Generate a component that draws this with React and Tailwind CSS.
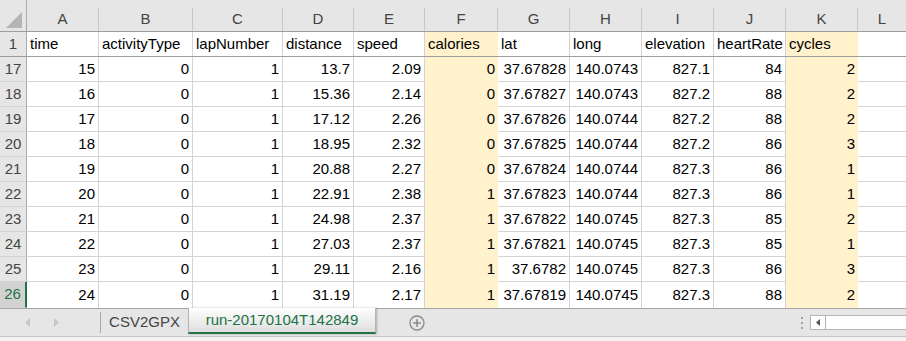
import React from 'react';

const cols = [
  { key: 'A', w: 72 },
  { key: 'B', w: 94 },
  { key: 'C', w: 90 },
  { key: 'D', w: 71 },
  { key: 'E', w: 71 },
  { key: 'F', w: 73, fill: true },
  { key: 'G', w: 72 },
  { key: 'H', w: 72 },
  { key: 'I', w: 72 },
  { key: 'J', w: 72 },
  { key: 'K', w: 72, fill: true },
];

const titles = ['time', 'activityType', 'lapNumber', 'distance', 'speed', 'calories', 'lat', 'long', 'elevation', 'heartRate', 'cycles'];

const rows = [
  [17, '15', '0', '1', '13.7', '2.09', '0', '37.67828', '140.0743', '827.1', '84', '2'],
  [18, '16', '0', '1', '15.36', '2.14', '0', '37.67827', '140.0743', '827.2', '88', '2'],
  [19, '17', '0', '1', '17.12', '2.26', '0', '37.67826', '140.0744', '827.2', '88', '2'],
  [20, '18', '0', '1', '18.95', '2.32', '0', '37.67825', '140.0744', '827.2', '86', '3'],
  [21, '19', '0', '1', '20.88', '2.27', '0', '37.67824', '140.0744', '827.3', '86', '1'],
  [22, '20', '0', '1', '22.91', '2.38', '1', '37.67823', '140.0744', '827.3', '86', '1'],
  [23, '21', '0', '1', '24.98', '2.37', '1', '37.67822', '140.0745', '827.3', '85', '2'],
  [24, '22', '0', '1', '27.03', '2.37', '1', '37.67821', '140.0745', '827.3', '85', '1'],
  [25, '23', '0', '1', '29.11', '2.16', '1', '37.6782', '140.0745', '827.3', '86', '3'],
  [26, '24', '0', '1', '31.19', '2.17', '1', '37.67819', '140.0745', '827.3', '88', '2'],
];

const Cell = ({ col, children, right, last }) => (
  <div
    style={{ width: col.w }}
    className={
      'h-full shrink-0 flex items-center px-[3px] overflow-hidden whitespace-nowrap ' +
      (right ? 'justify-end ' : 'justify-start ') +
      (col.fill ? 'bg-[#fff2cc] ' : 'bg-white border-r border-[#d4d4d4] ') +
      (col.fill || last ? '' : 'border-b border-[#d4d4d4]')
    }
  >
    {children}
  </div>
);

export default function App() {
  return (
    <div className="w-[906px] h-[341px] overflow-hidden bg-white text-[15px] text-black flex flex-col" style={{ fontFamily: '"Liberation Sans", Arial, sans-serif' }}>
      {/* column headers */}
      <div className="h-[32px] shrink-0 flex bg-[#e6e6e6] border-b border-[#9e9e9e] text-[#444]">
        <div className="w-[27px] shrink-0 h-full border-r border-[#ababab] flex items-end justify-end pr-[3px] pb-[2px]">
          <svg width="17" height="17" viewBox="0 0 17 17">
            <polygon points="0,16 16,0 16,16" fill="#b5b5b5" />
          </svg>
        </div>
        {cols.map((c) => (
          <div key={c.key} style={{ width: c.w }} className="shrink-0 h-full pt-[8px]">
            <div className="h-full border-r border-[#c8c8c8] flex items-center justify-center">{c.key}</div>
          </div>
        ))}
        <div className="flex-1 h-full pt-[8px] flex items-center justify-center">L</div>
      </div>

      {/* row 1 (frozen) */}
      <div className="h-[25px] shrink-0 flex border-b border-[#9e9e9e]">
        <div className="w-[27px] shrink-0 h-full bg-[#e6e6e6] border-r border-[#ababab] flex items-center justify-center text-[#444]">1</div>
        {cols.map((c, i) => (
          <Cell key={c.key} col={c} last>{titles[i]}</Cell>
        ))}
        <div className="flex-1 h-full bg-white" />
      </div>

      {/* data rows */}
      {rows.map((r, ri) => {
        const active = r[0] === 26;
        return (
          <div key={r[0]} className={'shrink-0 flex ' + (active ? 'h-[26px]' : 'h-[25px]')}>
            <div
              className={
                'w-[27px] shrink-0 h-full flex items-center justify-center border-b border-[#d4d4d4] ' +
                (active ? 'bg-[#d2d2d2] text-[#217346] border-r-2 border-r-[#217346]' : 'bg-[#e6e6e6] text-[#444] border-r border-r-[#ababab]')
              }
            >
              {r[0]}
            </div>
            {cols.map((c, i) => (
              <Cell key={c.key} col={c} right last={active}>{r[i + 1]}</Cell>
            ))}
            <div className={'flex-1 h-full bg-white ' + (active ? '' : 'border-b border-[#d4d4d4]')} />
          </div>
        );
      })}

      {/* sheet tab bar */}
      <div className="h-[29px] shrink-0 flex items-stretch bg-[#e6e6e6] border-t border-b border-t-[#a6a6a6] border-b-[#c8c8c8] text-[#444]">
        <div className="w-[100px] shrink-0 flex items-center pl-[25px] gap-[22px]">
          <svg width="6" height="9" viewBox="0 0 6 9"><polygon points="5,0 0,4.5 5,9" fill="#c6c6c6" /></svg>
          <svg width="6" height="9" viewBox="0 0 6 9"><polygon points="1,0 6,4.5 1,9" fill="#c6c6c6" /></svg>
        </div>
        <div className="w-px bg-[#a6a6a6] my-[3px]" />
        <div className="w-[87px] shrink-0 flex items-center justify-center">CSV2GPX</div>
        <div className="w-[188px] shrink-0 -mt-px mb-[2px] flex items-center justify-center text-[#217346] bg-gradient-to-b from-white to-[#dedede] border-x border-[#b5b5b5] border-b-2 border-b-[#217346] shadow-[1px_0_2px_rgba(0,0,0,0.25)]">
          run-20170104T142849
        </div>
        <div className="w-[82px] shrink-0 flex items-center justify-center">
          <svg width="16" height="16" viewBox="0 0 16 16">
            <circle cx="8" cy="8" r="7" fill="none" stroke="#8a8a8a" strokeWidth="1.3" />
            <path d="M8 4.2v7.6M4.2 8h7.6" stroke="#8a8a8a" strokeWidth="1.6" />
          </svg>
        </div>
        <div className="flex-1" />
        <div className="w-[17px] shrink-0 flex flex-col items-center justify-center gap-[3px]">
          <div className="w-[2px] h-[2px] bg-[#a0a0a0]" />
          <div className="w-[2px] h-[2px] bg-[#a0a0a0]" />
          <div className="w-[2px] h-[2px] bg-[#a0a0a0]" />
        </div>
        <div className="w-[96px] shrink-0 flex items-center">
          <div className="w-full h-[15px] bg-white border border-[#b5b5b5] border-r-0 flex">
            <div className="w-[15px] h-full border-r border-[#b5b5b5] flex items-center justify-center">
              <svg width="4" height="7" viewBox="0 0 4 7"><polygon points="4,0 0,3.5 4,7" fill="#555" /></svg>
            </div>
          </div>
        </div>
      </div>
      <div className="flex-1 bg-[#f3f3f3]" />
    </div>
  );
}
